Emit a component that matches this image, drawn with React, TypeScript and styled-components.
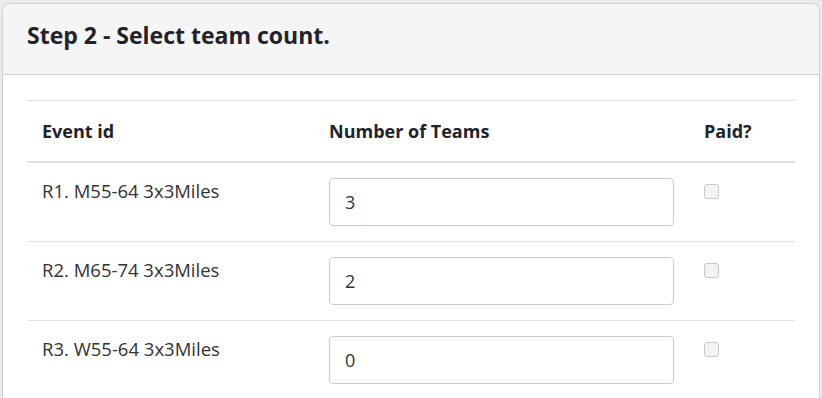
import React from 'react';
import styled, { createGlobalStyle } from 'styled-components';

const GlobalStyle = createGlobalStyle`
  html, body {
    margin: 0;
    padding: 0;
    background: #e9ebee;
    font-family: "Open Sans", Lato, sans-serif;
  }
`;

const Page = styled.div`
  padding: 3px 2px 0 2px;
  height: 398px;
  box-sizing: border-box;
  overflow: hidden;
`;

const Card = styled.div`
  background: #fff;
  border: 1px solid #cfcfcf;
  border-bottom: none;
  border-radius: 8px 8px 0 0;
  overflow: hidden;
`;

const CardHeader = styled.div`
  background: #f5f5f5;
  border-bottom: 1px solid #cfcfcf;
  height: 70px;
  padding: 0 24px;
  display: flex;
  align-items: center;
`;

const Title = styled.h3`
  margin: 0 0 8px 0;
  font-size: 23px;
  font-weight: 700;
  color: #22222b;
`;

const CardBody = styled.div`
  padding: 25px 24px 0 24px;
`;

const Table = styled.table`
  width: 100%;
  table-layout: fixed;
  border-collapse: collapse;
  border-top: 1px solid #dee2e6;
  color: #333;
  font-size: 18.5px;
`;

const HeadCell = styled.th<{ $width?: number }>`
  text-align: left;
  font-size: 18px;
  font-weight: 700;
  color: #22222b;
  padding: 0 15px;
  height: 60px;
  border-bottom: 2px solid #dee2e6;
  width: ${p => (p.$width ? `${p.$width}px` : 'auto')};
`;

const Row = styled.tr`
  border-bottom: 1px solid #dee2e6;
`;

const Cell = styled.td`
  vertical-align: top;
  padding: 15px 15px 15px 15px;
  line-height: 26px;
`;

const NumberInput = styled.input`
  display: block;
  width: 100%;
  height: 48px;
  box-sizing: border-box;
  border: 1px solid #ccc;
  border-radius: 4px;
  padding: 0 15px;
  font-family: "Open Sans", sans-serif;
  font-size: 18px;
  color: #333;
  background: #fff;
  outline: none;
`;

const Check = styled.span`
  display: block;
  width: 13px;
  height: 13px;
  margin-top: 6px;
  border: 1px solid #c8c8c8;
  border-radius: 3px;
  background: #f3f3f3;
`;

const events = [
  { id: 'R1. M55-64 3x3Miles', teams: '3' },
  { id: 'R2. M65-74 3x3Miles', teams: '2' },
  { id: 'R3. W55-64 3x3Miles', teams: '0' },
];

export default function App() {
  return (
    <Page>
      <GlobalStyle />
      <Card>
        <CardHeader>
          <Title>Step 2 - Select team count.</Title>
        </CardHeader>
        <CardBody>
          <Table>
            <thead>
              <tr>
                <HeadCell $width={257}>Event id</HeadCell>
                <HeadCell $width={345}>Number of Teams</HeadCell>
                <HeadCell>Paid?</HeadCell>
              </tr>
            </thead>
            <tbody>
              {events.map(ev => (
                <Row key={ev.id}>
                  <Cell>{ev.id}</Cell>
                  <Cell>
                    <NumberInput defaultValue={ev.teams} />
                  </Cell>
                  <Cell>
                    <Check />
                  </Cell>
                </Row>
              ))}
            </tbody>
          </Table>
        </CardBody>
      </Card>
    </Page>
  );
}
